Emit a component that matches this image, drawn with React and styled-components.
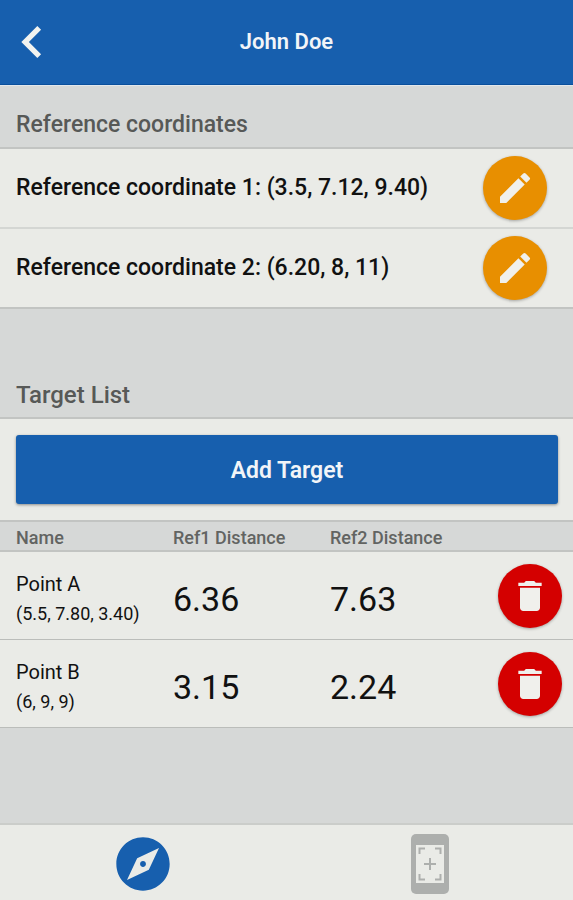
import styled, { createGlobalStyle } from 'styled-components';
import { MdChevronLeft, MdEdit, MdDelete, MdExplore } from 'react-icons/md';

const colors = {
  blue: '#175fae',
  gray: '#d6d8d7',
  white: '#eaebe7',
  border: '#c2c4c2',
  orange: '#e88f00',
  red: '#d40000',
};

const GlobalStyle = createGlobalStyle`
  * {
    box-sizing: border-box;
  }
  body {
    margin: 0;
    font-family: Roboto, 'Liberation Sans', sans-serif;
    color: #111;
    background-color: ${colors.gray};
  }
  button {
    font-family: inherit;
    border: none;
    padding: 0;
    cursor: pointer;
  }
`;

const Screen = styled.div`
  display: flex;
  flex-direction: column;
  min-height: 100vh;
`;

const Header = styled.header`
  display: grid;
  grid-template-columns: 64px 1fr 64px;
  align-items: center;
  height: 85px;
  background-color: ${colors.blue};
  border-bottom: 1px solid #0a4f9c;
  box-shadow: 0 1px 0 #e2e7ec;
`;

const BackButton = styled.button`
  display: flex;
  background-color: transparent;
  color: #f2f3f0;
`;

const Title = styled.h1`
  margin: 0;
  text-align: center;
  font-size: 22px;
  font-weight: 600;
  line-height: 28px;
  color: #f2f5f8;
`;

const Content = styled.main`
  flex: 1;
`;

const Section = styled.section`
  margin-bottom: ${({ $gap }) => $gap || '0'};
`;

const SectionTitle = styled.h2`
  margin: 0;
  padding: 26px 16px 8px;
  font-size: ${({ $large }) => ($large ? '24px' : '23px')};
  font-weight: 500;
  line-height: 28px;
  color: #575957;
  border-bottom: 2px solid ${colors.border};
`;

const CoordinateList = styled.ul`
  margin: 0;
  padding: 0;
  list-style: none;
`;

const CoordinateItem = styled.li`
  display: flex;
  align-items: center;
  justify-content: space-between;
  height: 80px;
  padding: 0 26px 0 16px;
  font-size: 23px;
  font-weight: 500;
  line-height: 28px;
  background-color: ${colors.white};
  border-bottom: 2px solid #d4d6d3;

  &:last-child {
    border-color: ${colors.border};
  }
`;

const RoundButton = styled.button`
  display: inline-flex;
  align-items: center;
  justify-content: center;
  flex-shrink: 0;
  width: 64px;
  height: 64px;
  border-radius: 50%;
  color: #f0f0ec;
  background-color: ${({ $color }) => $color};
  box-shadow: 0 1px 3px rgba(0, 0, 0, 0.3);
  vertical-align: middle;
`;

const AddPanel = styled.div`
  padding: 16px 15px 16px 16px;
  background-color: ${colors.white};
`;

const AddButton = styled.button`
  display: block;
  width: 100%;
  height: 69px;
  padding-top: 3px;
  border-radius: 3px;
  font-size: 23px;
  font-weight: 600;
  line-height: 28px;
  color: #f2f5f8;
  background-color: ${colors.blue};
  box-shadow: 0 1px 3px rgba(0, 0, 0, 0.4);
`;

const TargetTable = styled.table`
  width: 100%;
  table-layout: fixed;
  border-collapse: separate;
  border-spacing: 0;
`;

const HeadCell = styled.th`
  width: ${({ $rest }) => ($rest ? 'auto' : '27.4%')};
  height: 32px;
  padding: 4px 0 0 16px;
  text-align: left;
  white-space: nowrap;
  font-size: 18px;
  font-weight: 500;
  line-height: 20px;
  color: #626462;
  border-top: 2px solid ${colors.border};
  border-bottom: 2px solid ${colors.border};
`;

const Cell = styled.td`
  height: 88px;
  padding: 0 0 0 16px;
  white-space: nowrap;
  background-color: ${colors.white};
  border-bottom: 1px solid #bbbdba;
`;

const ActionCell = styled(Cell)`
  padding-right: 11px;
  text-align: right;
`;

const TargetName = styled.div`
  padding-top: 6px;
  font-size: 20px;
  line-height: 30px;
`;

const TargetPosition = styled.div`
  font-size: 18px;
  line-height: 30px;
`;

const Distance = styled.div`
  font-size: 34px;
  line-height: 40px;
  padding-top: 6px;
`;

const TabBar = styled.nav`
  display: flex;
  height: 77px;
  background-color: ${colors.white};
  border-top: 2px solid #cbcdca;
`;

const Tab = styled.button`
  flex: 1;
  display: flex;
  align-items: center;
  justify-content: center;
  padding-top: 3px;
  background-color: transparent;
  color: ${({ $active }) => ($active ? colors.blue : '#adafad')};
`;

const ScanIcon = () => (
  <svg width="38" height="60" viewBox="0 0 38 60" aria-hidden="true">
    <rect width="38" height="60" rx="5" fill="currentColor" />
    <rect x="5" y="11" width="28" height="38" fill={colors.white} />
    <path
      d="M8.500 20v-5.500h5.500M24 14.500h5.500v5.500M29.500 40v5.500h-5.500M14 45.500h-5.500v-5.500M19 24v12M13 30h12"
      fill="none"
      stroke="currentColor"
      strokeWidth="2"
    />
  </svg>
);

const coordinates = ['(3.5, 7.12, 9.40)', '(6.20, 8, 11)'];

const targets = [
  { name: 'Point A', position: '(5.5, 7.80, 3.40)', ref1: '6.36', ref2: '7.63' },
  { name: 'Point B', position: '(6, 9, 9)', ref1: '3.15', ref2: '2.24' },
];

const App = () => {
  return (
    <Screen>
      <GlobalStyle />
      <Header>
        <BackButton type="button" aria-label="Back">
          <MdChevronLeft size={64} />
        </BackButton>
        <Title>John Doe</Title>
      </Header>

      <Content>
        <Section $gap="46px">
          <SectionTitle>Reference coordinates</SectionTitle>
          <CoordinateList>
            {coordinates.map((value, index) => (
              <CoordinateItem key={value}>
                Reference coordinate {index + 1}: {value}
                <RoundButton type="button" $color={colors.orange} aria-label="Edit">
                  <MdEdit size={40} />
                </RoundButton>
              </CoordinateItem>
            ))}
          </CoordinateList>
        </Section>

        <Section>
          <SectionTitle $large>Target List</SectionTitle>
          <AddPanel>
            <AddButton type="button">Add Target</AddButton>
          </AddPanel>
          <TargetTable>
            <thead>
              <tr>
                <HeadCell>Name</HeadCell>
                <HeadCell>Ref1 Distance</HeadCell>
                <HeadCell>Ref2 Distance</HeadCell>
                <HeadCell $rest aria-label="Actions" />
              </tr>
            </thead>
            <tbody>
              {targets.map(({ name, position, ref1, ref2 }) => (
                <tr key={name}>
                  <Cell>
                    <TargetName>{name}</TargetName>
                    <TargetPosition>{position}</TargetPosition>
                  </Cell>
                  <Cell>
                    <Distance>{ref1}</Distance>
                  </Cell>
                  <Cell>
                    <Distance>{ref2}</Distance>
                  </Cell>
                  <ActionCell>
                    <RoundButton type="button" $color={colors.red} aria-label="Delete">
                      <MdDelete size={40} />
                    </RoundButton>
                  </ActionCell>
                </tr>
              ))}
            </tbody>
          </TargetTable>
        </Section>
      </Content>

      <TabBar>
        <Tab type="button" $active aria-label="Explore">
          <MdExplore size={64} />
        </Tab>
        <Tab type="button" aria-label="Scan">
          <ScanIcon />
        </Tab>
      </TabBar>
    </Screen>
  );
};

export default App;
